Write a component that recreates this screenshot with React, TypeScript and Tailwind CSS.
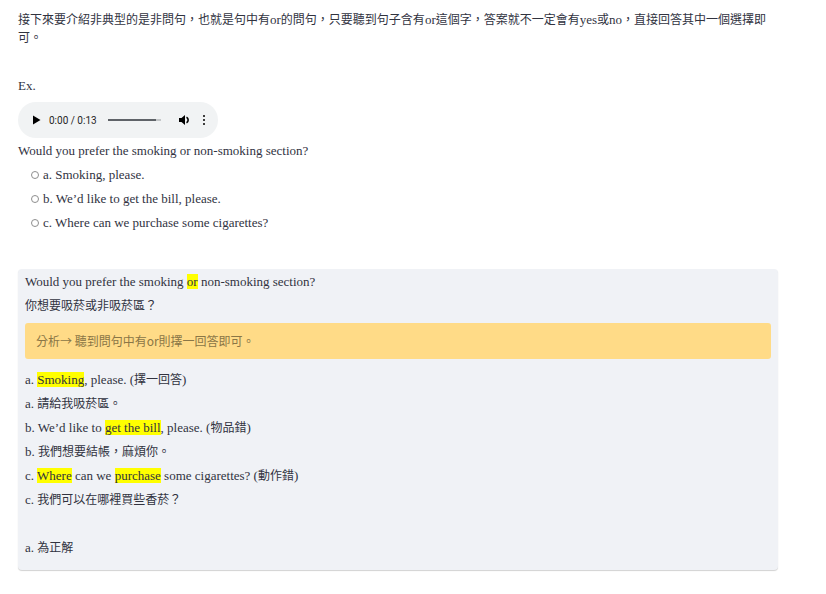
import type { ReactNode } from 'react'

// CJK runs are a touch smaller than the serif latin text
const Zh = ({ children }: { children: ReactNode }) => (
  <span className="text-[12px]">{children}</span>
)

const Hl = ({ children }: { children: ReactNode }) => (
  <span className="bg-[#ffff00]">{children}</span>
)

function AudioPlayer() {
  return (
    <div className="flex h-[36px] w-[200px] items-center rounded-full bg-[#f1f3f4] pl-[14px] pr-[12px] font-['Roboto',sans-serif] text-[10px] text-[#1f1f1f]">
      <svg width="9" height="10" viewBox="0 0 9 10" className="mr-[8px]">
        <path d="M1 0.5 L8.5 5 L1 9.5 Z" fill="#000" />
      </svg>
      <span className="whitespace-nowrap">0:00 / 0:13</span>
      <div className="ml-[11px] flex h-[3px] w-[53px] items-center">
        <div className="h-[2px] w-[48px] bg-[#5f6368]" />
        <div className="h-[2px] w-[5px] bg-[#c4c7c9]" />
      </div>
      <svg width="11" height="10" viewBox="0 0 11 10" className="ml-[18px]">
        <path d="M0 3 H2.5 L6 0 V10 L2.5 7 H0 Z" fill="#000" />
        <path d="M7.5 2.2 A3.2 3.2 0 0 1 7.5 7.8" stroke="#000" strokeWidth="1.6" fill="none" />
      </svg>
      <div className="ml-[13px] flex flex-col gap-[1.5px]">
        <div className="h-[2.5px] w-[2.5px] rounded-full bg-black" />
        <div className="h-[2.5px] w-[2.5px] rounded-full bg-black" />
        <div className="h-[2.5px] w-[2.5px] rounded-full bg-black" />
      </div>
    </div>
  )
}

function Option({ children }: { children: ReactNode }) {
  return (
    <div className="flex h-[24px] items-center pl-[13px]">
      <span className="mr-[4px] inline-block h-[8px] w-[8px] rounded-full border border-[#8e8e8e]" />
      <span>{children}</span>
    </div>
  )
}

export default function App() {
  return (
    <div className="min-h-[594px] bg-white font-['Liberation_Serif','Noto_Sans_CJK_TC',serif] text-[13px] text-[#31333f]">
      <div className="flex w-[778px] flex-col pl-[18px] pt-[11px]">
        <p className="w-[755px] leading-[18px]">
          <Zh>接下來要介紹非典型的是非問句，也就是句中有</Zh>or<Zh>的問句，只要聽到句子含有</Zh>or
          <Zh>這個字，答案就不一定會有</Zh>yes<Zh>或</Zh>no<Zh>，直接回答其中一個選擇即可。</Zh>
        </p>

        <div className="mt-[27px] leading-[24px]">Ex.</div>
        <div className="mt-[4px]">
          <AudioPlayer />
        </div>
        <div className="mt-[1px] leading-[24px]">Would you prefer the smoking or non-smoking section?</div>
        <Option>a. Smoking, please.</Option>
        <Option>b. We’d like to get the bill, please.</Option>
        <Option>c. Where can we purchase some cigarettes?</Option>

        {/* 解析 */}
        <div className="mt-[34px] w-[760px] rounded-[4px] bg-[#f0f2f6] px-[7px] pb-[10px] pt-px leading-[24px] shadow-[0_1px_1px_rgba(0,0,0,0.18)]">
          <div>
            Would you prefer the smoking <Hl>or</Hl> non-smoking section?
          </div>
          <div>
            <Zh>你想要吸菸或非吸菸區？</Zh>
          </div>
          <div className="mt-[5px] flex h-[36px] items-center rounded-[3px] bg-[#ffdb87] px-[11px] font-['Noto_Sans_CJK_TC','Noto_Sans',sans-serif] text-[12px] text-[#8a7646]">
            分析→ 聽到問句中有or則擇一回答即可。
          </div>
          <div className="mt-[9px]">
            a. <Hl>Smoking</Hl>, please. (<Zh>擇一回答</Zh>)
          </div>
          <div>
            a. <Zh>請給我吸菸區。</Zh>
          </div>
          <div>
            b. We’d like to <Hl>get the bill</Hl>, please. (<Zh>物品錯</Zh>)
          </div>
          <div>
            b. <Zh>我們想要結帳，麻煩你。</Zh>
          </div>
          <div>
            c. <Hl>Where</Hl> can we <Hl>purchase</Hl> some cigarettes? (<Zh>動作錯</Zh>)
          </div>
          <div>
            c. <Zh>我們可以在哪裡買些香菸？</Zh>
          </div>
          <div className="h-[24px]" />
          <div>
            a. <Zh>為正解</Zh>
          </div>
        </div>
      </div>
    </div>
  )
}
